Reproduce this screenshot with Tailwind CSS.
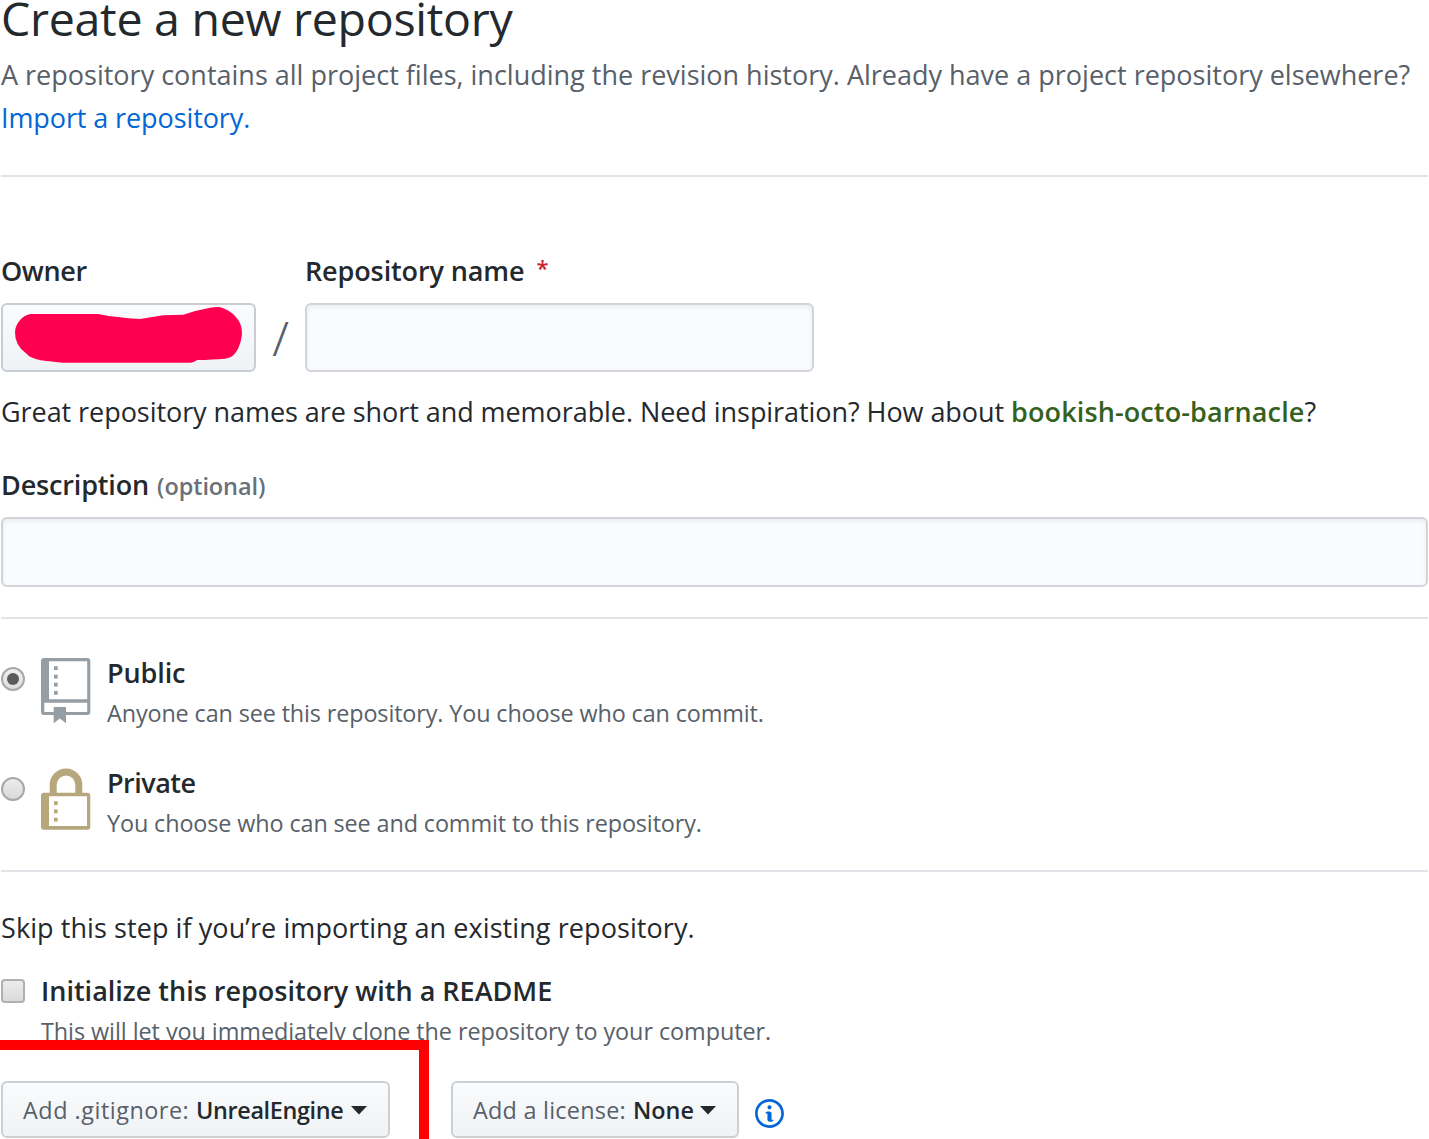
<!DOCTYPE html>
<html lang="en">
<head>
<meta charset="utf-8">
<title>Create a new repository</title>
<script src="https://cdn.jsdelivr.net/npm/@tailwindcss/browser@4"></script>
</head>
<body class="relative h-[1139px] overflow-hidden bg-white font-['Open_Sans','Noto_Sans',sans-serif] text-[27px] text-[#24292e] whitespace-nowrap">
<main class="flex w-[1428px] flex-col pl-px">
  <h1 class="text-[46.5px] leading-[36px] tracking-[-0.28px]">Create a new repository</h1>
  <p class="mt-[18px] leading-[42px] text-[#586069]">A repository contains all project files, including the revision history. Already have a project repository elsewhere?</p>
  <p class="leading-[44px] tracking-[-0.1px] text-[#0366d6]"><a>Import a repository.</a></p>
  <hr class="mt-[35px] border-t-2 border-[#e1e4e8]">

  <div class="mt-[80px] flex">
    <div class="w-[304px]">
      <label class="block leading-[27px] font-semibold tracking-[-0.4px]">Owner</label>
      <div class="mt-[19px] flex items-center">
        <button class="h-[69px] w-[255px] rounded-[6px] border-2 border-[#c9cdd1] bg-linear-to-b from-[#fafbfc] to-[#eff3f6]">
          <svg class="-ml-[3px] -mt-px" width="254" height="65" viewBox="0 165 762 195"><path fill="#ff0050" d="M45 245C47 220 68 195 92 192H295Q330 200 360 202Q400 207 420 207Q450 202 490 196L550 194Q580 183 610 178Q640 170 658 171C700 182 728 215 726 250C724 280 710 325 675 326Q640 329 592 330Q580 338 572 338H190Q140 334 122 331Q90 325 78 310Q44 285 45 245Z"/></svg>
        </button>
        <span class="w-[49px] text-center font-['Noto_Sans'] text-[48px] leading-[60px] font-light text-[#586069]">/</span>
      </div>
    </div>
    <div>
      <label class="flex h-[27px] leading-[27px] font-semibold tracking-[-0.12px]">Repository name<span class="ml-[12px] -mt-[3px] text-[22px] leading-[27px] font-semibold text-[#cb2431]">*</span></label>
      <input class="mt-[19px] block h-[69px] w-[509px] rounded-[6px] border-2 border-[#d1d5da] bg-[#fafbfc] shadow-[inset_0_2px_4px_rgba(27,31,35,0.075)]">
    </div>
  </div>
  <p class="mt-[19px] leading-[41px] tracking-[-0.06px]">Great repository names are short and memorable. Need inspiration? How about <b class="font-semibold tracking-[0.12px] text-[#35611f]">bookish-octo-barnacle</b>?</p>

  <label class="mt-[39px] flex h-[27px] items-baseline leading-[27px] font-semibold tracking-[-0.15px]">Description<span class="ml-[8px] text-[23.5px] font-semibold tracking-[-0.1px] text-[#6a7179]">(optional)</span></label>
  <input class="mt-[19px] block h-[70px] w-full rounded-[6px] border-2 border-[#d1d5da] bg-[#fafbfc] shadow-[inset_0_2px_4px_rgba(27,31,35,0.075)]">
  <hr class="mt-[30px] border-t-2 border-[#e1e4e8]">

  <div class="mt-[39px] flex h-[70px]">
    <span class="mt-[9px] flex size-6 items-center justify-center rounded-full border-2 border-[#a8a8a8] bg-linear-to-b from-[#f0f0f0] to-[#dedede]"><span class="size-3 rounded-full bg-[#5b5b5b]"></span></span>
    <svg class="ml-[16px]" width="50" height="66" viewBox="0 0 50 66" fill="#959da5"><path fill-rule="evenodd" d="M3 0H46.3Q49.3 0 49.3 3V54Q49.3 57 46.3 57H25V65.3L18.8 60.5L12.7 65.3V57H3Q0 57 0 54V3Q0 0 3 0ZM8 3.3V41.3H46.2V3.3ZM3.3 44.7V54H12.7V49H25V54H46.2V44.7Z"/><path d="M13 8.3h3.7V12H13zM13 16.7h3.7v3.7H13zM13 24.8h3.7v3.7H13zM13 33h3.7v3.7H13z"/></svg>
    <div class="ml-[16px]">
      <div class="mt-px leading-[27px] font-semibold tracking-[-0.1px]">Public</div>
      <div class="mt-[11px] text-[23.4px] leading-8 tracking-[-0.13px] text-[#586069]">Anyone can see this repository. You choose who can commit.</div>
    </div>
  </div>
  <div class="mt-[40px] flex h-[70px]">
    <span class="mt-[9px] size-6 rounded-full border-2 border-[#a8a8a8] bg-linear-to-b from-[#ececec] to-[#dadada]"></span>
    <svg class="ml-[16px]" width="50" height="62" viewBox="0 0 50 62" fill="#b6a77d"><path fill="none" stroke="#b6a77d" stroke-width="7" d="M12.2 26V16.8a12.8 12.8 0 0 1 25.6 0V26"/><path fill-rule="evenodd" d="M3 24.7H46.3Q49.3 24.7 49.3 27.7V58.7Q49.3 61.7 46.3 61.7H3Q0 61.7 0 58.7V27.7Q0 24.7 3 24.7ZM8 28.3V57.9H46V28.3Z"/><path d="M13 33.3h3.7V37H13zM13 41.6h3.7v3.7H13zM13 49.8h3.7v3.7H13z"/></svg>
    <div class="ml-[16px]">
      <div class="mt-px leading-[27px] font-semibold tracking-[-0.5px]">Private</div>
      <div class="mt-[11px] text-[23.4px] leading-8 tracking-[-0.12px] text-[#586069]">You choose who can see and commit to this repository.</div>
    </div>
  </div>
  <hr class="mt-[32px] border-t-2 border-[#e1e4e8]">

  <p class="mt-[42px] leading-[27px] tracking-[0.08px]">Skip this step if you’re importing an existing repository.</p>
  <div class="mt-[36px] flex">
    <span class="mt-[2px] size-6 rounded-[4px] border-2 border-[#b0b0b0] bg-linear-to-b from-[#ececec] to-[#dadada]"></span>
    <div class="ml-[16px]">
      <div class="leading-[27px] font-semibold">Initialize this repository with a README</div>
      <div class="mt-[11px] text-[23.4px] leading-8 tracking-[-0.06px] text-[#586069]">This will let you immediately clone the repository to your computer.</div>
    </div>
  </div>
  <div class="mt-[34px] flex text-[23.4px]">
    <button class="flex h-[57px] w-[389px] items-center rounded-[6px] border-2 border-[#cdd0d3] bg-linear-to-b from-[#fafbfc] to-[#eff3f6] pt-0.5 pl-[20px]"><span class="w-[173px] text-left tracking-[0.52px] text-[#586069]">Add .gitignore:</span><b class="w-[155px] text-left font-semibold tracking-[-0.35px]">UnrealEngine</b><svg width="16" height="9" viewBox="0 0 16 9"><path fill="#24292e" d="M0 0h16L8 8.5z"/></svg></button>
    <button class="ml-[61px] flex h-[57px] w-[288px] items-center rounded-[6px] border-2 border-[#cdd0d3] bg-linear-to-b from-[#fafbfc] to-[#eff3f6] pt-0.5 pl-[20px]"><span class="w-[160px] text-left tracking-[0.25px] text-[#586069]">Add a license:</span><b class="w-[67px] text-left font-semibold">None</b><svg width="16" height="9" viewBox="0 0 16 9"><path fill="#24292e" d="M0 0h16L8 8.5z"/></svg></button>
    <svg class="mt-4 ml-4" width="29" height="33" viewBox="0 0 14 16" fill="#0366d6"><path fill-rule="evenodd" d="M6.3 5.69a.942.942 0 0 1-.28-.7c0-.28.09-.52.28-.7.19-.18.42-.28.7-.28.28 0 .52.09.7.28.18.19.28.42.28.7 0 .28-.09.52-.28.7a1 1 0 0 1-.7.3c-.28 0-.52-.11-.7-.3zM8 7.99c-.02-.25-.11-.48-.31-.69-.2-.19-.42-.3-.69-.31H6c-.27.02-.48.13-.69.31-.2.2-.3.44-.31.69h1v3c.02.27.11.5.31.69.2.2.42.31.69.31h1c.27 0 .48-.11.69-.31.2-.19.3-.42.31-.69H8V7.98v.01zM7 2.3c-3.14 0-5.7 2.54-5.7 5.68 0 3.14 2.56 5.7 5.7 5.7s5.7-2.55 5.7-5.7c0-3.15-2.56-5.69-5.7-5.69v.01zM7 .98c3.86 0 7 3.14 7 7s-3.14 7-7 7-7-3.12-7-7 3.14-7 7-7z"/></svg>
  </div>
</main>
<!-- highlight around the .gitignore selector -->
<div class="absolute bottom-0 left-0 h-[99px] w-[429px] border-t-10 border-r-10 border-[#ff0000]"></div>
</body>
</html>
